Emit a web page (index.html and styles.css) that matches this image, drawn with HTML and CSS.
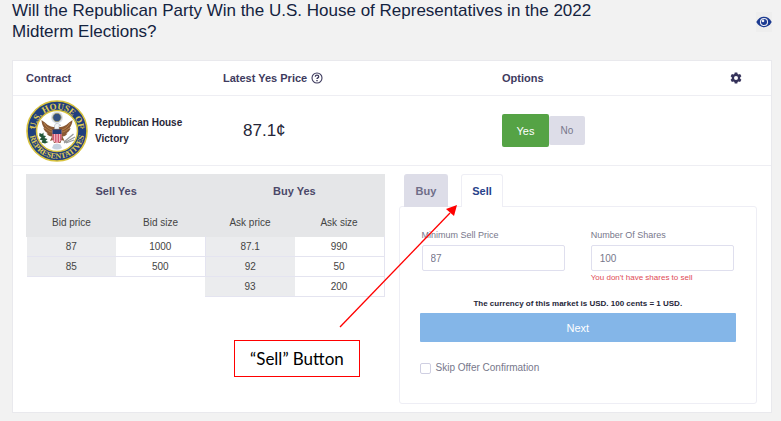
FILE: index.html
```html
<!DOCTYPE html>
<html lang="en">
<head>
<meta charset="utf-8">
<title>U.S. House Midterm Market</title>
<link rel="stylesheet" href="styles.css">
</head>
<body>
<div class="page">
  <header class="market-header">
    <h1 class="market-title">Will the Republican Party Win the U.S. House of Representatives in the 2022 Midterm Elections?</h1>
    <button class="icon-button watch" type="button" aria-label="Watch market">
      <svg width="16" height="12" viewBox="0 0 16 12">
        <path d="M0.3 6C2 2.7 4.8.8 8 .8S14 2.7 15.7 6C14 9.3 11.200 11.200 8 11.200S2 9.300 .3 6Z" fill="#1b3a91"/>
        <circle cx="8" cy="6" r="4.100" fill="#ededf2"/>
        <circle cx="8" cy="6" r="3" fill="#1b3a91"/>
        <circle cx="7" cy="4.900" r="1.300" fill="#ededf2"/>
      </svg>
    </button>
  </header>

  <main class="card">
    <div class="contract-grid headings">
      <span>Contract</span>
      <span class="with-icon">Latest Yes Price
        <svg width="12" height="12" viewBox="0 0 12 12" fill="none" stroke="#3e3b5e">
          <circle cx="6" cy="6" r="5" stroke-width="1.100"/>
          <path d="M4.300 4.800C4.300 2.500 7.700 2.600 7.700 4.700C7.700 5.900 6 5.800 6 7.100" stroke-width="1.300"/>
          <path d="M6 7.900V9.200" stroke-width="1.400"/>
        </svg>
      </span>
      <span>Options</span>
      <button class="icon-button" type="button" aria-label="Settings">
        <svg width="12" height="12" viewBox="0 0 12 12">
          <path fill="#35325a" fill-rule="evenodd" d="M4.700.5h2.600l.3 1.500 1 .6 1.500-.5 1.300 2.200-1.200 1v1.400l1.200 1-1.300 2.200-1.500-.5-1 .6-.3 1.500H4.700L4.400 10l-1-.6-1.500.5L.6 7.700l1.200-1V5.300l-1.200-1 1.300-2.200 1.500.5 1-.6ZM6 4a2 2 0 1 0 0 4 2 2 0 0 0 0-4Z"/>
        </svg>
      </button>
    </div>

    <div class="contract-grid contract">
      <div class="contract-name">
        <svg class="seal" width="62" height="62" viewBox="0 0 62 62" role="img" aria-label="Seal of the U.S. House of Representatives">
          <defs>
            <path id="arc-top" d="M10.700 38A21.500 21.500 0 1 1 51.300 38"/>
            <path id="arc-bottom" d="M3.700 27A27.600 27.600 0 1 0 58.300 27"/>
          </defs>
          <circle cx="31" cy="31" r="30" fill="#203f7d" stroke="#d8c23c" stroke-width="1.600"/>
          <circle cx="31" cy="31" r="20.500" fill="#fff" stroke="#d8c23c" stroke-width="1.500"/>
          <text class="seal-text seal-top"><textPath href="#arc-top" startOffset="50%" text-anchor="middle">U.S. HOUSE OF</textPath></text>
          <text class="seal-text"><textPath href="#arc-bottom" startOffset="50%" text-anchor="middle">REPRESENTATIVES</textPath></text>
          <circle cx="5.500" cy="28" r=".8" fill="#d8c23c"/>
          <circle cx="56.500" cy="28" r=".8" fill="#d8c23c"/>
          <circle cx="31" cy="17.500" r="6" fill="#d9e0ea"/>
          <circle cx="31" cy="17.500" r="4.200" fill="#324f80" stroke="#a99d65" stroke-width=".8"/>
          <path d="M27.500 27C23 27 20 23 15.500 20C15.800 25 17.500 27 18.700 28.500L17.200 28.300C18.500 31 20.200 32.500 22 33.500L20.500 33.600C22 36 24.500 36.700 26 36.500L24 41L27 40L28 43H34.500L35.500 40L38.500 41L36.500 36.500C39 36.500 40.500 35 41.500 33.600L40 33.500C42 32.500 43.500 31 44.800 28.300L43.300 28.500C45 26 46.300 24 46.500 20C42 23 39 27 34.500 27Z" fill="#8a5935"/>
          <path d="M18 23C20 27 23 29 26 30M19 28C21 30 24 32 26 32M44 23C42 27 39 29 36 30M43 28C41 30 38 32 36 32" fill="none" stroke="#c08a4e" stroke-width=".8"/>
          <path d="M28.500 29V26C28.500 23.500 31 22.800 33 24L35 25.500L33 25.700V29Z" fill="#f4f4f4" stroke="#99a2ae" stroke-width=".5"/>
          <path d="M26.500 30H35.500V38C35.500 41.500 33 42.500 31 43.500C29 42.500 26.500 41.500 26.500 38Z" fill="#f1b6c1"/>
          <path d="M27.300 33V40.500M29.800 33V42.500M32.300 33V42.500M34.800 33V40.500" stroke="#c94562" stroke-width="1.100"/>
          <path d="M26.500 29.500H35.500V34H26.500Z" fill="#223d78"/>
          <path d="M13.500 33L16 34L17.500 32.500L17.500 35.500L20 36L18.500 38L21.500 39L19.500 41L22.500 42L19 43.500L15.500 42.500L16.500 40.500L13.500 39.500L15.500 37.500L13.200 36Z" fill="#24573a"/>
          <path d="M38 42L47.500 34M38 43L49 37M40 43L48 40" stroke="#9a9c9c" stroke-width="1.300"/>
          <path d="M27.500 44.500Q31 43 34.500 44.500L36 48Q31 51 26 48Z" fill="#c5d1df"/>
        </svg>
        <strong>Republican House Victory</strong>
      </div>
      <div class="price">87.1¢</div>
      <div class="choice">
        <button class="yes" type="button">Yes</button>
        <button class="no" type="button">No</button>
      </div>
    </div>

    <div class="trade">
      <table class="book">
        <thead>
          <tr class="sides"><th colspan="2">Sell Yes</th><th colspan="2">Buy Yes</th></tr>
          <tr class="columns"><th>Bid price</th><th>Bid size</th><th>Ask price</th><th>Ask size</th></tr>
        </thead>
        <tbody>
          <tr><td class="rate">87</td><td class="size">1000</td><td class="rate">87.1</td><td class="size">990</td></tr>
          <tr><td class="rate">85</td><td class="size">500</td><td class="rate">92</td><td class="size">50</td></tr>
          <tr><td class="none" colspan="2"></td><td class="rate">93</td><td class="size">200</td></tr>
        </tbody>
      </table>

      <section class="order">
        <div class="tabs" role="tablist">
          <button class="tab" type="button" role="tab" aria-selected="false">Buy</button>
          <button class="tab active" type="button" role="tab" aria-selected="true">Sell</button>
        </div>
        <form class="panel">
          <div class="fields">
            <div class="field">
              <label for="price">Minimum Sell Price</label>
              <input id="price" type="text" value="87">
            </div>
            <div class="field">
              <label for="shares">Number Of Shares</label>
              <input id="shares" type="text" value="100">
              <p class="error">You don't have shares to sell</p>
            </div>
          </div>
          <p class="currency">The currency of this market is USD. 100 cents = 1 USD.</p>
          <button class="next" type="button">Next</button>
          <label class="skip"><input type="checkbox">Skip Offer Confirmation</label>
        </form>
      </section>
    </div>
  </main>

  <svg class="arrow" width="120" height="124" viewBox="0 0 120 124" aria-hidden="true">
    <path d="M2 123L112 9" stroke="#f00" stroke-width="1.300"/>
    <path d="M119 1L116 12L108 5Z" fill="#f00"/>
  </svg>
  <div class="callout">“Sell” Button</div>
</div>
</body>
</html>
```
FILE: styles.css
```css
* { box-sizing: border-box; }

body {
  margin: 0;
  background: #fff;
  color: #262638;
  font-family: "Liberation Sans", Arial, sans-serif;
  font-size: 10px;
}

button, input { font-family: inherit; }
p { margin: 0; }

.page {
  position: relative;
  padding: 0 9px 9px 12px;
  background: #f2f2f2;
}

.market-header {
  display: flex;
  justify-content: space-between;
  align-items: flex-start;
  height: 60px;
}

.market-title {
  max-width: 600px;
  margin: 0;
  color: #14233f;
  font-size: 17px;
  font-weight: 400;
  line-height: 21px;
}

.icon-button {
  display: flex;
  align-items: center;
  padding: 0;
  border: 0;
  background: none;
}

.watch {
  height: 20px;
  margin-top: 12px;
  background: #eee;
}

.card {
  padding-bottom: 8px;
  border: 1px solid #e9e9ed;
  background: #fff;
}

.contract-grid {
  display: grid;
  grid-template-columns: 197fr 279fr 228fr 28fr;
  align-items: center;
  padding: 0 13px;
  border-bottom: 1px solid #eeeef3;
}

.headings {
  height: 35px;
  color: #3e3b5e;
  font-size: 11px;
  font-weight: 700;
}

.with-icon {
  display: flex;
  align-items: center;
  gap: 4px;
}

.contract { height: 70px; }

.contract-name {
  display: flex;
  align-items: center;
  gap: 7px;
  padding-right: 12px;
  line-height: 16px;
}

.seal { flex: none; }

.seal-text {
  fill: #e0ce54;
  font-family: "Liberation Serif", serif;
  font-size: 8px;
  font-weight: 700;
}

.seal-top { font-size: 9px; }

.price {
  padding-left: 20px;
  font-size: 17px;
}

.choice {
  display: flex;
  align-items: center;
}

.yes, .no {
  border: 0;
  border-radius: 2px;
}

.yes {
  width: 47px;
  height: 33px;
  background: #55a345;
  color: #fff;
  font-size: 11px;
}

.no {
  width: 36px;
  height: 29px;
  background: #dddde8;
  color: #77778b;
  font-size: 10px;
}

.trade {
  display: grid;
  grid-template-columns: 1fr 1fr;
  align-items: start;
  gap: 14px;
  padding: 8px 14px 0 13px;
}

.book {
  width: 100%;
  border-collapse: collapse;
  table-layout: fixed;
  color: #444;
  text-align: center;
}

.book th, .book td { padding: 0; }

.book thead { background: #e5e6e8; }

.book thead tr { border: 1px solid #e5e6e8; }

.sides th {
  height: 33px;
  color: #4b4868;
  font-size: 11px;
}

.columns th {
  height: 29px;
  font-weight: 400;
}

.book td {
  height: 20px;
  border-bottom: 1px solid #e4e4f0;
}

.book .size { border-right: 1px solid #e4e4f0; }
.book .rate { background: #ebecee; }
.book .none { border-bottom: 0; }

.tabs {
  display: flex;
  gap: 13px;
  padding-left: 5px;
  margin-bottom: -1px;
}

.tab {
  position: relative;
  height: 33px;
  padding: 0 11px;
  border: 1px solid #dddde8;
  border-bottom: 0;
  border-radius: 3px 3px 0 0;
  background: #dddde8;
  color: #6f6d88;
  font-size: 11px;
  font-weight: 700;
}

.tab.active {
  padding: 0 10px;
  border-color: #eeeef5;
  background: #fff;
  color: #28428a;
}

.panel {
  padding: 22px 20px 28px;
  border: 1px solid #eeeef5;
  border-radius: 3px;
}

.fields {
  display: grid;
  grid-template-columns: 1fr 1fr;
  gap: 26px;
  padding: 0 2px;
}

.field label {
  display: block;
  color: #77778b;
  font-size: 9px;
  line-height: 12px;
}

.field input {
  display: block;
  width: 100%;
  height: 26px;
  margin-top: 4px;
  padding: 0 8px;
  border: 1px solid #dfdfee;
  border-radius: 2px;
  background: #fff;
  color: #77778b;
  font-size: 10px;
}

.error {
  color: #e04a55;
  font-size: 8px;
  line-height: 14px;
}

.currency {
  margin-top: 12px;
  font-size: 8px;
  font-weight: 700;
  line-height: 14px;
  text-align: center;
}

.next {
  display: block;
  width: 100%;
  height: 29px;
  margin-top: 2px;
  border: 0;
  border-radius: 1px;
  background: #84b6e8;
  color: #fff;
  font-size: 11px;
}

.skip {
  display: flex;
  align-items: center;
  gap: 5px;
  margin-top: 19px;
  color: #77778b;
  font-size: 10px;
  line-height: 14px;
}

.skip input {
  width: 11px;
  height: 11px;
  margin: 0;
  border: 1px solid #cfcfe2;
  border-radius: 2px;
  background: #fff;
  appearance: none;
}

.arrow {
  position: absolute;
  top: 204px;
  left: 338px;
}

.callout {
  position: absolute;
  top: 340px;
  left: 234px;
  padding: 8px 15px;
  border: 1px solid #f00;
  background: #fff;
  color: #000;
  font-family: Lato, "Open Sans", sans-serif;
  font-size: 17px;
  line-height: 19px;
}
```
